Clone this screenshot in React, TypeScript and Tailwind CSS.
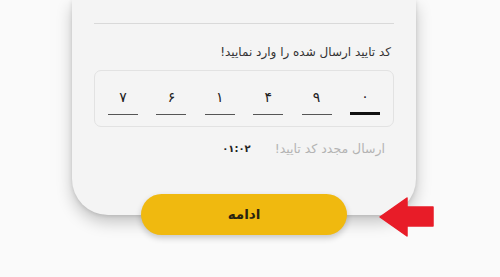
import React from "react";

export default function App() {
  const digits = ["۰", "۹", "۴", "۱", "۶", "۷"];
  return (
    <div
      className="relative w-[500px] h-[277px] overflow-hidden bg-[#fafafa]"
      style={{ fontFamily: '"DejaVu Sans", "Noto Sans", sans-serif' }}
    >
      <div className="ml-[72px] flex w-[344px] flex-col items-center">
        <div
          dir="rtl"
          className="flex h-[215px] w-[344px] flex-col rounded-b-[36px] bg-[#f4f4f4] px-[22px] pt-[23px] shadow-[0_7px_16px_rgba(0,0,0,0.22),0_1px_4px_rgba(0,0,0,0.12)]"
        >
          <div className="h-px w-full bg-[#d9d9d9]" />
          <div className="mt-[19px] pr-[3px] text-[12px] leading-[18px] text-[#333]">
            کد تایید ارسال شده را وارد نمایید!
          </div>
          <div className="mt-[9px] flex h-[57px] items-center justify-between rounded-[7px] border border-[#e2e2e2] px-[13px] pt-[4px]">
            {digits.map((d, i) => (
              <div key={i} className="flex w-[30px] flex-col items-center">
                <span className="text-[14px] leading-[20px] text-[#222]">{d}</span>
                <div
                  className={
                    i === 0
                      ? "mt-[6px] h-[2.5px] w-[30px] bg-[#111]"
                      : "mt-[7px] h-px w-[30px] bg-[#555]"
                  }
                />
              </div>
            ))}
          </div>
          <div className="mt-[13px] flex items-center pr-[9px]">
            <span className="text-[12.5px] leading-[18px] text-[#b3b3b3]">
              ارسال مجدد کد تایید!
            </span>
            <span className="mr-[24px] text-[10px] font-bold leading-[18px] text-[#222]">
              ۰۱:۰۲
            </span>
          </div>
        </div>
        <button
          dir="rtl"
          className="relative -mt-[21px] flex h-[41px] w-[206px] items-center justify-center rounded-full bg-[#f0b90f] text-[13.5px] font-bold text-[#2a2410] shadow-[0_3px_6px_rgba(0,0,0,0.2)]"
        >
          ادامه
        </button>
      </div>
      <svg
        className="absolute left-[378px] top-[196px]"
        width="58"
        height="42"
        viewBox="0 0 58 42"
      >
        <path
          d="M2 21 L29 2 L29 11 L55 11 L55 30 L29 30 L29 40 Z"
          fill="#e81c28"
          stroke="#e81c28"
          strokeWidth="1.5"
          strokeLinejoin="round"
        />
      </svg>
    </div>
  );
}
